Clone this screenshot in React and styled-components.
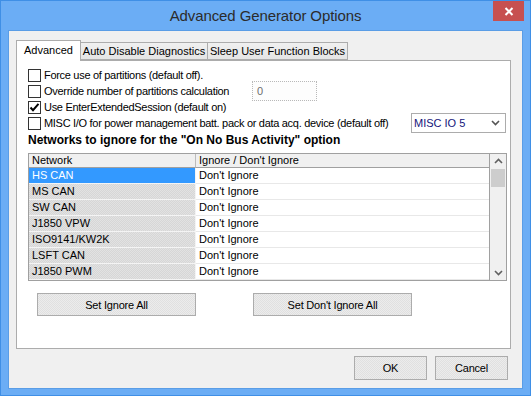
import React from "react";
import styled, { createGlobalStyle } from "styled-components";

// global page reset
const GlobalStyle = createGlobalStyle`
  html, body {
    margin: 0;
    padding: 0;
  }
  body {
    width: 531px;
    height: 396px;
    overflow: hidden;
    font-family: "Liberation Sans", Arial, sans-serif;
    font-size: 11px;
    color: #000;
  }
`;

const dither = (a, b) =>
  `repeating-conic-gradient(${a} 0 25%, ${b} 0 50%) 0 0 / 2px 2px`;

// window frame
const Window = styled.div`
  box-sizing: border-box;
  width: 531px;
  height: 396px;
  display: flex;
  flex-direction: column;
  background: #6badf5;
  border: 1px solid #3f8fe6;
`;

const TitleBar = styled.div`
  height: 29px;
  display: grid;
  grid-template-columns: 1fr auto 1fr;
  align-items: center;
`;

const Title = styled.div`
  grid-column: 2;
  font-size: 15px;
  color: #2b2b2b;
  letter-spacing: -0.1px;
`;

const CloseButton = styled.div`
  grid-column: 3;
  justify-self: end;
  align-self: start;
  width: 31px;
  height: 20px;
  margin-right: 6px;
  background: #c75050;
  display: flex;
  align-items: center;
  justify-content: center;
`;

const Client = styled.div`
  flex: 1;
  margin: 0 7px 6px;
  background: #f0f0f0;
  border: 1px solid #5a9de6;
  padding: 9px 11px 0 7px;
  display: flex;
  flex-direction: column;
`;

// tabs
const TabStrip = styled.div`
  height: 20px;
  display: flex;
  align-items: flex-end;
`;

const Tab = styled.div`
  box-sizing: border-box;
  width: ${(p) => p.$w}px;
  height: ${(p) => (p.$active ? 21 : 18)}px;
  margin-bottom: ${(p) => (p.$active ? -1 : 0)}px;
  margin-left: ${(p) => (p.$first ? 0 : -1)}px;
  position: relative;
  z-index: ${(p) => (p.$active ? 1 : 0)};
  border: 1px solid #acacac;
  border-bottom: ${(p) => (p.$active ? "none" : "1px solid #acacac")};
  background: ${(p) => (p.$active ? "#fff" : "linear-gradient(#f0f0f0, #e5e5e5)")};
  display: flex;
  align-items: center;
  justify-content: center;
  padding-bottom: ${(p) => (p.$active ? 2 : 0)}px;
  white-space: nowrap;
`;

const Panel = styled.div`
  box-sizing: border-box;
  height: 289px;
  background: #fff;
  border: 1px solid #acacac;
  padding: 6px 3px 0 11px;
  display: flex;
  flex-direction: column;
`;

// option rows
const OptionRow = styled.div`
  height: 16px;
  display: flex;
  align-items: center;
`;

const CheckItem = styled.label`
  display: flex;
  align-items: center;
  gap: 3px;
  width: ${(p) => (p.$w ? `${p.$w}px` : "auto")};
  flex: none;
  letter-spacing: -0.3px;
  white-space: nowrap;
`;

const Box = styled.span`
  box-sizing: border-box;
  width: 13px;
  height: 13px;
  border: 1px solid #333;
  background: #fff;
  display: flex;
  align-items: center;
  justify-content: center;
`;

const TextBox = styled.div`
  box-sizing: border-box;
  width: 65px;
  height: 20px;
  border: 1px dotted #b9b9b9;
  background: #fdfdfd;
  color: #6d6d6d;
  padding-left: 4px;
  display: flex;
  align-items: center;
`;

const Combo = styled.div`
  box-sizing: border-box;
  width: 95px;
  height: 20px;
  border: 1px solid #acacac;
  background: #fff;
  color: #14147a;
  padding: 0 5px 0 2px;
  display: flex;
  align-items: center;
  justify-content: space-between;
`;

const SectionTitle = styled.div`
  margin-top: 2px;
  height: 14px;
  line-height: 14px;
  font-size: 12px;
  font-weight: bold;
  white-space: nowrap;
`;

// network grid
const GridBox = styled.div`
  margin-top: 6px;
  border: 1px solid #a0a0a0;
  display: flex;
`;

const Table = styled.div`
  flex: 1;
  display: grid;
  grid-template-columns: 167px 1fr;
  grid-auto-rows: 16px;
  grid-template-rows: 14px;
`;

const HeadCell = styled.div`
  box-sizing: border-box;
  background: #f0f0f0;
  border-bottom: 1px solid #a0a0a0;
  border-right: ${(p) => (p.$first ? "1px solid #bcbcbc" : "none")};
  padding-left: 3px;
  line-height: 13px;
  white-space: nowrap;
`;

const Cell = styled.div`
  box-sizing: border-box;
  padding-left: 3px;
  line-height: 15px;
  white-space: nowrap;
  border-bottom: 1px solid ${(p) => (p.$first ? "#f4f4f4" : "#e8e8e8")};
  border-right: ${(p) => (p.$first ? "1px solid #f4f4f4" : "none")};
  color: ${(p) => (p.$sel ? "#fff" : "#000")};
  background: ${(p) =>
    p.$sel ? "#3399ff" : p.$first ? dither("#e2e2e2", "#d6d6d6") : "#fff"};
`;

const ScrollBar = styled.div`
  width: 16px;
  border-left: 1px solid #a0a0a0;
  background: #f0f0f0;
  display: flex;
  flex-direction: column;
  align-items: center;
`;

const ScrollArrow = styled.div`
  height: 14px;
  display: flex;
  align-items: center;
  justify-content: center;
`;

const Thumb = styled.div`
  width: 14px;
  height: 18px;
  margin-top: 1px;
  background: #cdcdcd;
`;

const ScrollSpace = styled.div`
  flex: 1;
`;

// buttons
const ButtonRow = styled.div`
  margin-top: 12px;
  padding-left: 9px;
  display: flex;
  gap: 57px;
`;

const Button = styled.button`
  box-sizing: border-box;
  width: ${(p) => p.$w}px;
  height: ${(p) => p.$h || 23}px;
  border: 1px solid #acacac;
  background: ${dither("#ececec", "#e0e0e0")};
  font-family: "Liberation Sans", Arial, sans-serif;
  font-size: 11px;
  letter-spacing: -0.2px;
  color: #000;
  padding: 0;
`;

const Footer = styled.div`
  margin-top: 7px;
  padding-right: 3px;
  display: flex;
  justify-content: flex-end;
  gap: 8px;
`;

const networks = [
  "HS CAN",
  "MS CAN",
  "SW CAN",
  "J1850 VPW",
  "ISO9141/KW2K",
  "LSFT CAN",
  "J1850 PWM",
];

const Chevron = ({ up, color = "#606060" }) => (
  <svg width="9" height="6" viewBox="0 0 9 6">
    <path
      d={up ? "M1 5 L4.5 1.5 L8 5" : "M1 1 L4.5 4.5 L8 1"}
      fill="none"
      stroke={color}
      strokeWidth="1.6"
    />
  </svg>
);

const Check = ({ checked }) => (
  <Box>
    {checked && (
      <svg width="11" height="11" viewBox="0 0 11 11">
        <path d="M1.5 5.5 L4 8.2 L9.5 1.8" fill="none" stroke="#000" strokeWidth="2" />
      </svg>
    )}
  </Box>
);

// main function
const App = () => {
  return (
    <>
      <GlobalStyle />
      <Window>
        <TitleBar>
          <Title>Advanced Generator Options</Title>
          <CloseButton>
            <svg width="10" height="9" viewBox="0 0 10 9">
              <path d="M1.5 1 L8.5 8 M8.5 1 L1.5 8" stroke="#fff" strokeWidth="2" />
            </svg>
          </CloseButton>
        </TitleBar>
        <Client>
          <TabStrip>
            <Tab $active $first $w={65}>Advanced</Tab>
            <Tab $w={128}>Auto Disable Diagnostics</Tab>
            <Tab $w={141}>Sleep User Function Blocks</Tab>
          </TabStrip>
          <Panel>
            <OptionRow>
              <CheckItem>
                <Check />
                Force use of partitions (default off).
              </CheckItem>
            </OptionRow>
            <OptionRow>
              <CheckItem $w={224}>
                <Check />
                Override number of partitions calculation
              </CheckItem>
              <TextBox>0</TextBox>
            </OptionRow>
            <OptionRow>
              <CheckItem>
                <Check checked />
                Use EnterExtendedSession (default on)
              </CheckItem>
            </OptionRow>
            <OptionRow>
              <CheckItem $w={383}>
                <Check />
                MISC I/O for power management batt. pack or data acq. device (default off)
              </CheckItem>
              <Combo>
                MISC IO 5
                <Chevron color="#555" />
              </Combo>
            </OptionRow>
            <SectionTitle>Networks to ignore for the "On No Bus Activity" option</SectionTitle>
            <GridBox>
              <Table>
                <HeadCell $first>Network</HeadCell>
                <HeadCell>Ignore / Don't Ignore</HeadCell>
                {networks.map((n, i) => (
                  <React.Fragment key={n}>
                    <Cell $first $sel={i === 0}>{n}</Cell>
                    <Cell>Don't Ignore</Cell>
                  </React.Fragment>
                ))}
              </Table>
              <ScrollBar>
                <ScrollArrow>
                  <Chevron up />
                </ScrollArrow>
                <Thumb />
                <ScrollSpace />
                <ScrollArrow>
                  <Chevron />
                </ScrollArrow>
              </ScrollBar>
            </GridBox>
            <ButtonRow>
              <Button $w={159}>Set Ignore All</Button>
              <Button $w={159}>Set Don't Ignore All</Button>
            </ButtonRow>
          </Panel>
          <Footer>
            <Button $w={73} $h={24}>OK</Button>
            <Button $w={73} $h={24}>Cancel</Button>
          </Footer>
        </Client>
      </Window>
    </>
  );
};

export default App;
